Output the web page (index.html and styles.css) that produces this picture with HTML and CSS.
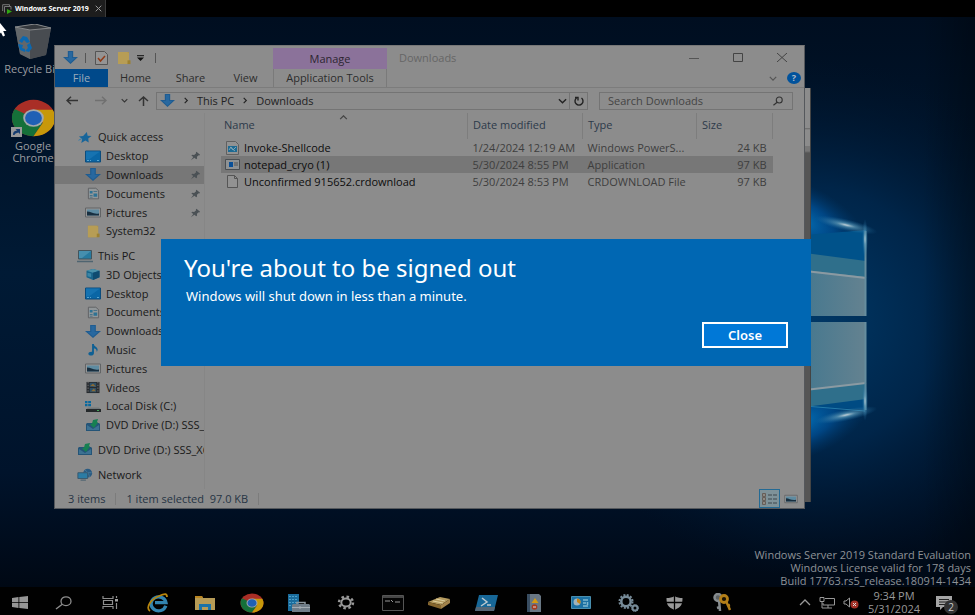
FILE: index.html
```html
<!DOCTYPE html>
<html lang="en">
<head>
<meta charset="utf-8">
<title>Windows Server 2019</title>
<link rel="stylesheet" href="styles.css">
</head>
<body>
<svg class="defs" aria-hidden="true">
  <symbol id="i-down" viewBox="1 1 14 14" preserveAspectRatio="none"><path d="M5.500 1h5v6.500H15L8 15 1 7.500h4.500z" fill="#1f5c91"/><path d="M6.500 2h3v6.500h3L8 13.500 3.500 8.500h3z" fill="#28689f"/></symbol>
  <symbol id="i-desktop" viewBox="0 0 16 12"><path d="M.5.500h15v11H.5z" fill="#0a66a5" stroke="#0c4c7c"/><path d="M1 1h14L4 9H1z" fill="#1673b1"/><path d="M2 10h2M5 10h1M12 10h2" stroke="#59a4ce"/></symbol>
  <symbol id="i-doc" viewBox="0 0 14 16" preserveAspectRatio="none"><path d="M1.500 1.500h8l3 3v10h-11z" fill="#929799" stroke="#5c5e60"/><path d="M3 5h3v3H3zM7 8h4v4H7z" fill="#2d7294"/><path d="M7 5.500h4M3 10.500h3M3 12.500h3" stroke="#3c6d86"/></symbol>
  <symbol id="i-pic" viewBox="0 0 16 12"><path d="M.5 1.500h15v9H.5z" fill="#969696" stroke="#626466"/><path d="M2 3h12v6H2z" fill="#5e8ba1"/><path d="M2 5c4 0 6 3 12 2v2H2z" fill="#182f40"/></symbol>
  <symbol id="i-folder" viewBox="0 0 14 15" preserveAspectRatio="none"><path d="M1 1h11v9h1v4H1z" fill="#a98f45"/><path d="M1 1h9l2 1v11l-2 1H1z" fill="#b79d55"/><path d="M10.500 10h3v4h-3z" fill="#9c8030"/></symbol>
  <symbol id="i-star" viewBox="0 0 16 14"><path d="M10 1l.8 4 4.200.5-3.500 2.700.5 4.300-3.600-2.200L4 13l1-4.500L1.500 6l4.500-.6z" fill="#17659a"/><path d="M1 10l4-2" stroke="#2f7cae"/></symbol>
  <symbol id="i-pin" viewBox="0 0 12 12" preserveAspectRatio="none"><path d="M7 1l4 3.500-1 .8-.6-.2L7.600 7l.1 2-.9.8-2-1.700L1 11l2.600-3.700L1.500 5.500l.9-.9 2.100.2L6.700 2.700 6.400 1.700z" fill="#4b5155"/></symbol>
  <symbol id="i-pc" viewBox="0 0 16 13"><path d="M1.500.500h13v8.500h-13z" fill="#277a9f" stroke="#43545c"/><path d="M2 1h12L5 8H2z" fill="#468fae"/><path d="M0 11.500h16" stroke="#4f6470" stroke-width="1.500"/></symbol>
  <symbol id="i-cube" viewBox="0 0 16 14"><path d="M1 3l7-2 7 2v7l-7 3-7-3z" fill="#18648a"/><path d="M1 3l7 2 7-2-7-2z" fill="#4a91aa"/><path d="M8 5l7-2v7l-7 3z" fill="#0e4b70"/><path d="M2 5l4 1v4L2 9z" fill="#3b86a6"/></symbol>
  <symbol id="i-music" viewBox="0 0 12 14"><path d="M5 1h2c0 3 4 3 4 6 0 1-.5 2-1 2.500C10 6.500 8 6 7 6v5c0 1.500-1.500 2.500-3.200 2.500S1 12.500 1 11.500 2.500 9.300 5 9.500z" fill="#0f6094"/></symbol>
  <symbol id="i-video" viewBox="0 0 14 14"><path d="M0 1h14v12H0z" fill="#272a2e"/><path d="M3.500 2h7v4.500h-7zM3.500 7.500h7V12h-7z" fill="#2f5068"/><path d="M4 5l3-2 3 3zM5 11l3-3 2 3z" fill="#8a6b35"/><path d="M1.700 1v12M12.300 1v12" stroke="#777" stroke-dasharray="1.500 1.500"/></symbol>
  <symbol id="i-disk" viewBox="0 0 16 13"><path d="M0 1h2.500v2.300H0zM3.200 1h2.800v2.300H3.200zM0 4h2.500v2.300H0zM3.200 4h2.800v2.300H3.200z" fill="#08699f"/><path d="M3 7.500h11l2 2H1z" fill="#72787a"/><path d="M1 9h15v3H1z" fill="#25292b"/><path d="M12 10.500h2" stroke="#44a65a"/></symbol>
  <symbol id="i-dvd" viewBox="0 0 16 13"><path d="M2 4h12l1 1v7H1V5z" fill="#245477"/><path d="M2 6l6 4 6-4v5H2z" fill="#3c7192"/><path d="M8 1l5-1-1 3 1 .5L9 9 5 5.500l2-1z" fill="#178052"/></symbol>
  <symbol id="i-net" viewBox="0 0 18 14"><circle cx="12" cy="5.500" r="5" fill="#2a5b82"/><path d="M9 2c3 2 5 5 5 8M7.500 5h9" stroke="#487a9b" fill="none"/><path d="M1 5h11v6.500H1z" fill="#2c7ca4" stroke="#37566b"/><path d="M4 13.300h6" stroke="#3b5869"/></symbol>
  <symbol id="i-chev" viewBox="0 0 10 6"><path d="M1 1l4 4 4-4" fill="none" stroke="currentColor" stroke-width="1.500"/></symbol>
  <symbol id="i-right" viewBox="0 0 6 8"><path d="M1.500 1l3 3-3 3" fill="none" stroke="currentColor" stroke-width="1.300"/></symbol>
  <symbol id="i-mag" viewBox="0 0 14 12"><circle cx="8.500" cy="4.800" r="3.600" fill="none" stroke="currentColor" stroke-width="1.300"/><path d="M6 7.500L1.500 11" stroke="currentColor" stroke-width="1.500"/></symbol>
  <symbol id="i-chrome" viewBox="0 0 48 48" preserveAspectRatio="none"><circle cx="24" cy="24" r="23" fill="#a92e26"/><path d="M24 24L4 12.600A23 23 0 0 0 24 47l10-17z" fill="#157039"/><path d="M24 13.500h20.500A23 23 0 0 1 24 47l10-17z" fill="#c7980a"/><circle cx="24" cy="24" r="11" fill="#a4a8ac"/><circle cx="24" cy="24" r="9" fill="#1f60b5"/></symbol>
</svg>

<header class="vmbar">
  <button class="vmtab" type="button">
    <svg width="10" height="10" viewBox="0 0 10 10"><path d="M.7 7V.7H7.500V3M2.500 8.500v-6H9v3" fill="none" stroke="#777"/><path d="M5 5l5 2.500L5 10z" fill="#2fa812"/></svg>
    <span>Windows Server 2019</span>
    <svg class="vmclose" width="7" height="7" viewBox="0 0 7 7"><path d="M.7.700l5.600 5.600M6.300.7L.7 6.300" stroke="#999"/></svg>
  </button>
</header>

<main class="desktop">
  <svg class="wallpaper" viewBox="0 0 975 570" preserveAspectRatio="none" aria-hidden="true">
    <defs>
      <radialGradient id="glow" cx="811" cy="300" r="260" gradientUnits="userSpaceOnUse"><stop offset="0" stop-color="#003866"/><stop offset=".5" stop-color="#002549"/><stop offset="1" stop-color="#00142b" stop-opacity="0"/></radialGradient>
      <radialGradient id="beam"><stop offset="0" stop-color="#0472b8"/><stop offset=".5" stop-color="#00529a" stop-opacity=".7"/><stop offset="1" stop-color="#003b70" stop-opacity="0"/></radialGradient>
      <radialGradient id="flare"><stop offset="0" stop-color="#c4d3d9"/><stop offset=".3" stop-color="#5d9ab8" stop-opacity=".7"/><stop offset="1" stop-color="#1b6a9c" stop-opacity="0"/></radialGradient>
      <linearGradient id="base" x1="0" y1="0" x2="0" y2="1"><stop offset="0" stop-color="#000e20"/><stop offset=".45" stop-color="#001a35"/><stop offset=".8" stop-color="#00132b"/><stop offset="1" stop-color="#000814"/></linearGradient>
      <linearGradient id="side"><stop offset="0" stop-color="#000" stop-opacity="0"/><stop offset=".7" stop-color="#000" stop-opacity="0"/><stop offset="1" stop-color="#000" stop-opacity=".3"/></linearGradient>
      <linearGradient id="pane"><stop offset="0" stop-color="#46788f"/><stop offset="1" stop-color="#648290"/></linearGradient>
    </defs>
    <path d="M0 0h975v570H0z" fill="url(#base)"/>
    <path d="M0 0h975v570H0z" fill="url(#glow)"/>
    <ellipse cx="800" cy="203" rx="72" ry="36" transform="rotate(26 800 203)" fill="url(#beam)"/>
    <ellipse cx="800" cy="405" rx="72" ry="36" transform="rotate(-20 800 405)" fill="url(#beam)"/>
    <path d="M800 0h175v570H800z" fill="url(#side)"/>
    <path d="M805 218l61-5v86h-61z" fill="#00528a"/>
    <path d="M805 236l61 8v55h-61z" fill="#2f6f8b"/>
    <path d="M805 253l61 7v39h-61z" fill="url(#pane)"/>
    <path d="M805 254l61 7" stroke="#8b9aa2" stroke-width="2"/>
    <path d="M805 305h61v88l-61-4z" fill="#004b83"/>
    <path d="M805 305h61v77l-61 8z" fill="#2f6f8b"/>
    <path d="M805 305h61v61l-61 7z" fill="url(#pane)"/>
    <path d="M805 373l61-7" stroke="#8b9aa2" stroke-width="2"/>
    <path d="M865.500 214v85M865.500 305v88" stroke="#668d9e" stroke-width="2"/>
    <path d="M805 389l60 5" stroke="#247ba9"/>
    <ellipse cx="846" cy="208" rx="32" ry="6" transform="rotate(13 846 208)" fill="url(#flare)"/>
    <ellipse cx="846" cy="398" rx="32" ry="6" transform="rotate(-12 846 398)" fill="url(#flare)"/>
    <ellipse cx="865" cy="222" rx="3" ry="20" fill="url(#flare)"/>
    <ellipse cx="865" cy="384" rx="3" ry="20" fill="url(#flare)"/>
  </svg>

  <div class="shortcuts">
    <a class="shortcut" href="#recycle-bin">
      <svg width="38" height="36" viewBox="0 0 38 36"><path d="M1 3l20-3 16 4-5 27-16 4-10-5z" fill="#55595d"/><path d="M1 3l15 3v29L6 30z" fill="#63676a"/><path d="M16 6l21-2-5 27-16 4z" fill="#484c51"/><path d="M1 3l20-3 16 4-21 2z" fill="#34383d" stroke="#858789"/><path d="M5 17l4-5 4 1 3 5-3 1-3-3-2 3zM4 20l5 1-1 3 3 1v3l-5-2zM16 19l2 5-3 4-4-1 3-3-1-3z" fill="#0b68b0"/></svg>
      <span>Recycle Bin</span>
    </a>
    <a class="shortcut chrome" href="#chrome">
      <svg width="46" height="38" viewBox="0 0 46 38"><use href="#i-chrome" x="1" y="0" width="45" height="38"/><path d="M1 28h11v10H1z" fill="#999"/><path d="M3 36c0-3 1-4 4-4.500L5.500 30H10v5l-1.500-1.500C6 34 5 34.500 4.500 36z" fill="#163d70"/></svg>
      <span>Google Chrome</span>
    </a>
  </div>
  <svg class="cursor" width="7" height="14" viewBox="0 0 7 14" aria-hidden="true"><path d="M0 0l6.500 8H3.200L5 12.500 3 13.500 1 9.500l-1 1z" fill="#fff"/></svg>

  <div class="backwindow"></div>

  <section class="explorer" aria-label="Downloads">
    <div class="titlebar">
      <div class="quickbar">
        <svg width="15" height="13"><use href="#i-down"/></svg><i class="sep"></i>
        <svg class="props" width="13" height="14" viewBox="0 0 13 14"><path d="M.5.500h9l3 3v10H.5z" fill="#949494" stroke="#555"/><path d="M3 7l2.500 3L10 5" fill="none" stroke="#903b18" stroke-width="1.500"/></svg>
        <svg class="newfolder" width="14" height="14"><use href="#i-folder"/></svg>
        <svg class="more" width="7" height="6" viewBox="0 0 7 6"><path d="M0 .7h7" stroke="#111"/><path d="M0 2.500h7L3.500 6z" fill="#111"/></svg><i class="sep"></i>
      </div>
      <div class="context">Manage</div>
      <h1 class="wintitle">Downloads</h1>
      <div class="winctl">
        <button type="button" aria-label="Minimize"><svg width="10" height="10"><path d="M0 5.500h10" stroke="#555"/></svg></button>
        <button type="button" aria-label="Maximize"><svg width="10" height="9"><path d="M.5.500h9v8h-9z" fill="none" stroke="#444"/></svg></button>
        <button type="button" aria-label="Close window"><svg width="10" height="9"><path d="M0 0l10 9M10 0L0 9" stroke="#444"/></svg></button>
      </div>
    </div>
    <div class="ribbon">
      <button class="tab file" type="button">File</button>
      <button class="tab" type="button">Home</button>
      <button class="tab" type="button">Share</button>
      <button class="tab" type="button">View</button>
      <button class="tab tools" type="button">Application Tools</button>
      <span class="ribbonend">
        <svg width="8" height="5"><use href="#i-chev"/></svg>
        <button class="help" type="button" aria-label="Help">?</button>
      </span>
    </div>
    <div class="address">
      <button class="back" type="button" aria-label="Back"><svg width="12" height="9" viewBox="0 0 12 9"><path d="M12 4.500H1M5 .7L1 4.500l4 3.800" fill="none" stroke="currentColor" stroke-width="1.400"/></svg></button>
      <button class="forward" type="button" aria-label="Forward"><svg width="12" height="9" viewBox="0 0 12 9"><path d="M0 4.500h11M7 .7l4 3.800-4 3.800" fill="none" stroke="currentColor" stroke-width="1.400"/></svg></button>
      <button class="recent" type="button" aria-label="Recent locations"><svg width="7" height="5"><use href="#i-chev"/></svg></button>
      <button class="up" type="button" aria-label="Up"><svg width="11" height="10" viewBox="0 0 11 10"><path d="M5.500 10V1M1 5l4.500-4L10 5" fill="none" stroke="currentColor" stroke-width="1.500"/></svg></button>
      <div class="path">
        <svg width="15" height="13"><use href="#i-down"/></svg>
        <svg width="6" height="7"><use href="#i-right"/></svg>
        <a href="#pc">This PC</a>
        <svg width="6" height="7"><use href="#i-right"/></svg>
        <a href="#downloads">Downloads</a>
        <button class="history" type="button" aria-label="Previous locations"><svg width="9" height="6"><use href="#i-chev"/></svg></button>
        <button class="refresh" type="button" aria-label="Refresh"><svg width="10" height="10" viewBox="0 0 10 10"><path d="M7.500 2A4 4 0 1 1 2.500 2M1 1.500h3v3" fill="none" stroke="currentColor" stroke-width="1.400"/></svg></button>
      </div>
      <label class="search"><input type="search" placeholder="Search Downloads" aria-label="Search Downloads"><svg width="12" height="10"><use href="#i-mag"/></svg></label>
    </div>

    <div class="content">
      <nav class="tree" aria-label="Folders">
        <div class="group g6">
          <a class="root" href="#q"><svg><use href="#i-star"/></svg>Quick access</a>
          <a href="#q1"><svg><use href="#i-desktop"/></svg>Desktop<svg class="pin"><use href="#i-pin"/></svg></a>
          <a class="selected" href="#q2"><svg><use href="#i-down"/></svg>Downloads<svg class="pin"><use href="#i-pin"/></svg></a>
          <a href="#q3"><svg class="page"><use href="#i-doc"/></svg>Documents<svg class="pin"><use href="#i-pin"/></svg></a>
          <a href="#q4"><svg><use href="#i-pic"/></svg>Pictures<svg class="pin"><use href="#i-pin"/></svg></a>
          <a href="#q5"><svg class="page"><use href="#i-folder"/></svg>System32</a>
        </div>
        <div class="group g10">
          <a class="root" href="#p"><svg><use href="#i-pc"/></svg>This PC</a>
          <a href="#p1"><svg><use href="#i-cube"/></svg>3D Objects</a>
          <a href="#p2"><svg><use href="#i-desktop"/></svg>Desktop</a>
          <a href="#p3"><svg class="page"><use href="#i-doc"/></svg>Documents</a>
          <a href="#p4"><svg><use href="#i-down"/></svg>Downloads</a>
          <a href="#p5"><svg><use href="#i-music"/></svg>Music</a>
          <a href="#p6"><svg><use href="#i-pic"/></svg>Pictures</a>
          <a href="#p7"><svg><use href="#i-video"/></svg>Videos</a>
          <a href="#p8"><svg><use href="#i-disk"/></svg>Local Disk (C:)</a>
          <a href="#p9"><svg><use href="#i-dvd"/></svg>DVD Drive (D:) SSS_X64</a>
        </div>
        <div class="group"><a class="root" href="#d"><svg><use href="#i-dvd"/></svg>DVD Drive (D:) SSS_X64</a></div>
        <div class="group"><a class="root" href="#n"><svg><use href="#i-net"/></svg>Network</a></div>
      </nav>
      <div class="files">
        <table>
          <colgroup><col><col class="c-date"><col class="c-type"><col class="c-size"></colgroup>
          <thead><tr><th><span>Name</span><svg class="sort" width="9" height="5"><use href="#i-chev"/></svg></th><th>Date modified</th><th>Type</th><th>Size</th></tr></thead>
          <tbody>
            <tr><td><span class="fname"><svg width="13" height="14" viewBox="0 0 13 14"><path d="M.5.500h9l3 3v10H.5z" fill="#929292" stroke="#606060"/><path d="M2 5h9v6H2z" fill="#1d6a93"/><path d="M3 9l2-3 2 3 3-3M4 6l5 4" stroke="#7fa4b4" fill="none"/></svg>Invoke-Shellcode</span></td><td>1/24/2024 12:19 AM</td><td>Windows PowerS...</td><td>24 KB</td></tr>
            <tr class="selected"><td><span class="fname"><svg width="15" height="11" viewBox="0 0 15 11"><path d="M.5.500h14v10H.5z" fill="#8e9294" stroke="#494e52"/><path d="M4 3h4v5H4z" fill="#084f98"/><path d="M9 4h4M9 6h4" stroke="#555"/></svg>notepad_cryo (1)</span></td><td>5/30/2024 8:55 PM</td><td>Application</td><td>97 KB</td></tr>
            <tr><td><span class="fname"><svg width="13" height="13" viewBox="0 0 13 13"><path d="M1.500.500h7l3 3v9h-10z" fill="#929292" stroke="#555"/><path d="M8.500.500v3h3" fill="none" stroke="#555"/></svg>Unconfirmed 915652.crdownload</span></td><td>5/30/2024 8:53 PM</td><td>CRDOWNLOAD File</td><td>97 KB</td></tr>
          </tbody>
        </table>
      </div>
    </div>

    <footer class="status">
      <span class="count">3 items</span><i></i><span>1 item selected&nbsp; 97.0 KB</span><i></i>
      <div class="views">
        <button class="on" type="button" aria-label="Details view"><svg width="17" height="12" viewBox="0 0 17 12"><path d="M1.500.500h3v3h-3zM1.500 4.500h3v3h-3zM1.500 8.500h3v3h-3z" fill="#8d8a84" stroke="#665e58"/><path d="M7 2h4M12 2h4M7 6h4M12 6h4M7 10h4M12 10h4" stroke="#3c464c"/></svg></button>
        <button type="button" aria-label="Large icons view"><svg width="14" height="10"><use href="#i-pic"/></svg></button>
      </div>
    </footer>
  </section>

  <section class="dialog" role="alertdialog" aria-labelledby="dlg-title" aria-describedby="dlg-text">
    <h2 id="dlg-title">You're about to be signed out</h2>
    <p id="dlg-text">Windows will shut down in less than a minute.</p>
    <button type="button">Close</button>
  </section>

  <p class="watermark">Windows Server 2019 Standard Evaluation<br>Windows License valid for 178 days<br>Build 17763.rs5_release.180914-1434</p>
</main>

<footer class="taskbar">
  <button class="start" type="button" aria-label="Start"><svg width="16" height="13" viewBox="0 0 16 13"><path d="M0 2l6.500-1v5.200H0zM7.300.9L16 0v6.200H7.300zM0 6.900h6.500V12L0 11zM7.300 6.900H16V13l-8.700-.9z" fill="#969696"/></svg></button>
  <button type="button" aria-label="Search"><svg width="17" height="14" viewBox="0 0 17 14"><ellipse cx="11" cy="5.200" rx="5" ry="4.400" fill="none" stroke="#8e8e8e" stroke-width="1.300"/><path d="M7.300 8.300L1 13" stroke="#8e8e8e" stroke-width="1.400"/></svg></button>
  <button type="button" aria-label="Task View"><svg width="17" height="13" viewBox="0 0 17 13"><path d="M1 0v2.500h10V0M1 13v-2.500h10V13M1.500 4.500h9v4h-9zM14.500 0v2M14.500 7v6" fill="none" stroke="#8e8e8e" stroke-width="1.200"/><path d="M13 3h3v2.500h-3z" fill="#a0a0a0"/></svg></button>
  <button type="button" aria-label="Internet Explorer"><svg width="22" height="20" viewBox="0 0 22 20"><path d="M18.800 12.800A7.500 7 0 1 1 19 9.700H8" fill="none" stroke="#3284b0" stroke-width="3.300"/><path d="M3 18C-2 15 4 6 12 3c7-3 8-2 8 1" fill="none" stroke="#b8860d" stroke-width="1.800"/></svg></button>
  <button type="button" aria-label="File Explorer"><svg width="22" height="16" viewBox="0 0 22 16"><path d="M1 1h7l1 2h12v12H1z" fill="#b69b56"/><path d="M1 1h7l1 2H1z" fill="#b98521"/><path d="M5 9h12v6h-3v-3H8v3H5z" fill="#1a72a7"/></svg></button>
  <button type="button" aria-label="Google Chrome"><svg width="24" height="20"><use href="#i-chrome"/></svg></button>
  <button type="button" aria-label="Server Manager"><svg width="24" height="20" viewBox="0 0 24 20"><path d="M1 1h11v17H1z" fill="#1b6c9c"/><path d="M2 3.500h9M2 6.500h9M2 9.500h9M2 12.500h9" stroke="#4da0c8" stroke-dasharray="2 1"/><path d="M10 11V9.500h8V11" fill="none" stroke="#8e989f" stroke-width="1.500"/><path d="M6 11h16l1 1v7H5v-7z" fill="#707d88"/><path d="M5 14.500h18M13 13v3" stroke="#a4adb4"/></svg></button>
  <button type="button" aria-label="Settings"><svg width="18" height="15" viewBox="0 0 18 15"><ellipse cx="9" cy="7.500" rx="7" ry="5.800" fill="none" stroke="#999" stroke-width="2.500" stroke-dasharray="2.500 2.550"/><ellipse cx="9" cy="7.500" rx="4.700" ry="3.900" fill="none" stroke="#999" stroke-width="2"/></svg></button>
  <button type="button" aria-label="Command Prompt"><svg width="22" height="16" viewBox="0 0 22 16"><path d="M.5.500h21v15H.5z" fill="#050505" stroke="#555"/><path d="M1 2h20" stroke="#888"/><path d="M3 6h3M7 5v2M9 5l2 2M13 7h5" stroke="#999"/></svg></button>
  <button type="button" aria-label="Local policy"><svg width="23" height="13" viewBox="0 0 23 13"><path d="M0 6l12-5 10 2-9 6z" fill="#b59b60"/><path d="M0 6l13 3v4L0 9z" fill="#86662e"/><path d="M13 9l9-6v4l-9 6z" fill="#a3834b"/><path d="M5 5l10 2M8 3l9 2" stroke="#ddd0a0"/></svg></button>
  <button type="button" aria-label="Windows PowerShell ISE"><svg width="23" height="16" viewBox="0 0 23 16"><path d="M4 0h19l-4 16H0z" fill="#176797"/><path d="M1 12h19l-1 4H0z" fill="#546675"/><path d="M7 3l5 4-6 4M12 10h4" fill="none" stroke="#bec9cf" stroke-width="1.500"/></svg></button>
  <button type="button" aria-label="Event Viewer"><svg width="16" height="18" viewBox="0 0 16 18"><path d="M1 0h12l2 2v16H1z" fill="#697784"/><path d="M1 0h3v18H1z" fill="#394d61"/><path d="M9 4l3.500 5h-7z" fill="#d69a13"/><circle cx="8.500" cy="13" r="2.800" fill="#a83a1f"/><path d="M7 13h3" stroke="#ddd"/></svg></button>
  <button type="button" aria-label="Control Panel"><svg width="20" height="13" viewBox="0 0 20 13"><path d="M.5.500h19v12H.5z" fill="#1b70a3" stroke="#498eae"/><circle cx="6" cy="6" r="3.500" fill="#9eb4bd"/><path d="M6 6V2.500A3.500 3.500 0 0 1 9 8z" fill="#c58416"/><path d="M12 4h5M12 7h3M12 10h5M16.500 6v3" stroke="#80b8d0" stroke-width="1.500"/></svg></button>
  <button type="button" aria-label="Services"><svg width="22" height="18" viewBox="0 0 22 18"><circle cx="9" cy="7.500" r="6.500" fill="none" stroke="#778b98" stroke-width="2" stroke-dasharray="2 1.400"/><circle cx="9" cy="7.500" r="4.700" fill="none" stroke="#778b98" stroke-width="2.500"/><circle cx="18" cy="14" r="2.500" fill="none" stroke="#778b98" stroke-width="2"/><circle cx="18" cy="14" r="3.500" fill="none" stroke="#778b98" stroke-dasharray="1.200 1"/></svg></button>
  <button type="button" aria-label="Windows Security"><svg width="17" height="14" viewBox="0 0 17 14"><path d="M8.500 0c2 1.500 5 2 8 2 0 6-1 9-8 12C1.500 11 .5 8 .5 2c3 0 6-.5 8-2z" fill="#999"/><path d="M8.500 0v14M0 6.500h17" stroke="#000" stroke-width="1.300"/></svg></button>
  <button type="button" aria-label="Credentials"><svg width="20" height="19" viewBox="0 0 20 19"><circle cx="6" cy="4.500" r="3.500" fill="#5c6164" stroke="#858b8e" stroke-width="2.500"/><path d="M7 7l1 11M8 14l-3 1" stroke="#858b8e" stroke-width="2.500"/><circle cx="12" cy="6" r="3.500" fill="#1a1204" stroke="#b27e18" stroke-width="2.800"/><path d="M14 8l4 9M15 13l3-1" stroke="#b27e18" stroke-width="2.500"/></svg></button>
  <div class="tray">
    <svg width="12" height="7" viewBox="0 0 12 7"><path d="M1 6l5-5 5 5" fill="none" stroke="#999" stroke-width="1.300"/></svg>
    <svg width="16" height="12" viewBox="0 0 16 12"><path d="M6 1.500h9.500v6.500H4V6M1 .5h4v4H1zM3 4v7h10M9 8v3" fill="none" stroke="#999"/></svg>
    <svg width="16" height="12" viewBox="0 0 16 12"><path d="M1 4h2l3.500-3v9L3 7H1z" fill="none" stroke="#999"/><circle cx="11.500" cy="7.500" r="4" fill="#a33127"/><path d="M10 6l3 3M13 6l-3 3" stroke="#ddd"/></svg>
    <time datetime="2024-05-31T21:34">9:34 PM<br>5/31/2024</time>
    <button class="notify" type="button" aria-label="Notifications, 2 new"><svg width="16" height="14" viewBox="0 0 16 14"><path d="M0 0h16v11H7l-3 3v-3H0z" fill="#a5a5a5"/><path d="M3 3.500h10M3 6h10M3 8.500h6" stroke="#222"/></svg><span>2</span></button>
  </div>
</footer>
</body>
</html>
```
FILE: styles.css
```css
* { box-sizing: border-box; }

body {
  margin: 0;
  height: 100vh;
  min-height: 480px;
  display: flex;
  flex-direction: column;
  overflow: hidden;
  background: #000;
  color: #111;
  font: 11px/16px "Open Sans", "Noto Sans", sans-serif;
}

button {
  display: flex;
  align-items: center;
  justify-content: center;
  margin: 0;
  padding: 0;
  border: 0;
  background: none;
  color: inherit;
  font: inherit;
}

a { color: inherit; text-decoration: none; }
svg { flex: none; display: block; }
.defs { position: absolute; width: 0; height: 0; }

/* Console tab strip */
.vmbar { flex: none; height: 17px; display: flex; background: #000; }
.vmtab {
  gap: 3px;
  padding: 0 3px 0 2px;
  border-right: 1px solid #3a3a3a;
  background: #1d1d1d;
  color: #fff;
  font-family: "Noto Sans", sans-serif;
  font-size: 7px;
  font-weight: 700;
}
.vmclose { margin-left: 3px; }

/* Desktop */
.desktop { position: relative; flex: 1; min-height: 0; overflow: hidden; }
.wallpaper { position: absolute; inset: 0; width: 100%; height: 100%; }
.cursor { position: absolute; left: 0; top: 6px; }
.shortcuts {
  position: relative;
  width: 66px;
  padding-top: 7px;
  display: flex;
  flex-direction: column;
  gap: 24px;
  color: #9a9ca0;
}
.shortcut {
  display: flex;
  flex-direction: column;
  align-items: center;
  line-height: 12px;
  text-align: center;
}
.shortcut span { margin-top: 3px; white-space: nowrap; }
.chrome span { width: 50px; white-space: normal; }

.backwindow {
  position: absolute;
  left: 400px;
  right: 164px;
  top: 71px;
  bottom: 85px;
  border-right: 1px solid #444;
  background: linear-gradient(#8c8c8c 40px, #666 40px, #8c8c8c 42px, #8c8c8c 58px, #777 58px, #777 63px, #555 65px);
}

.explorer {
  position: absolute;
  left: 54px;
  right: 170px;
  top: 28px;
  bottom: 78px;
  display: flex;
  flex-direction: column;
  border: 1px solid #55585c;
  border-top-color: #777;
  background: #8c8c8c;
}

.titlebar { flex: none; height: 23px; display: flex; align-items: stretch; }
.quickbar { width: 218px; display: flex; align-items: center; padding-left: 8px; }
.sep { width: 1px; height: 10px; margin-left: 7px; background: #555; }
.props { margin-left: 9px; }
.newfolder { margin-left: 9px; }
.more { margin: 0 4px 0 6px; }
.context {
  width: 114px;
  margin-top: 2px;
  background: #8b729a;
  color: #2b2530;
  font-weight: 500;
  line-height: 21px;
  text-align: center;
}
.wintitle { flex: 1; margin: 0 0 0 12px; color: #666; font-size: 11px; font-weight: 400; line-height: 23px; }
.winctl { display: flex; }
.winctl button { width: 44px; }

.ribbon { flex: none; height: 19px; display: flex; border-bottom: 1px solid #7c7c7c; }
.tab { width: 55px; color: #2c2c2c; }
.tab.file { width: 53px; background: #00498a; color: #9aabba; font-weight: 500; }
.tab.tools { width: 114px; border: solid #7a7a7a; border-width: 0 1px; white-space: nowrap; }
.ribbonend { flex: 1; display: flex; align-items: center; justify-content: flex-end; gap: 10px; padding-right: 3px; color: #555; }
.help { width: 14px; height: 12px; border-radius: 50%; background: #00529c; color: #b0bcc8; font-size: 9px; font-weight: 700; }

.address { flex: none; height: 25px; display: flex; align-items: center; padding: 0 11px 0 5px; color: #333; }
.back { width: 24px; }
.forward { width: 34px; color: #707070; }
.recent { width: 12px; }
.up { width: 26px; }
.path {
  flex: 1;
  height: 18px;
  display: flex;
  align-items: center;
  gap: 8px;
  padding-left: 3px;
  border: 1px solid #747474;
  color: #222;
}
.history { margin-left: auto; }
.refresh { width: 18px; height: 16px; margin-left: -6px; border-left: 1px solid #747474; }
.search {
  width: 194px;
  height: 18px;
  margin-left: 11px;
  padding: 0 8px;
  display: flex;
  align-items: center;
  border: 1px solid #747474;
}
.search input { flex: 1; min-width: 0; padding: 0; border: 0; outline: 0; background: none; font: inherit; }
.search input::placeholder { color: #444; opacity: 1; }

.content { flex: 1; min-height: 0; display: flex; }
.tree {
  width: 150px;
  padding: 15px 0 5px;
  display: flex;
  flex-direction: column;
  gap: 6px;
  border-right: 1px solid #868686;
  color: #191919;
}
.group { flex: 1 1 0; min-height: 0; display: flex; flex-direction: column; }
.g6 { flex-grow: 6; }
.g10 { flex-grow: 10; }
.tree a {
  flex: 1 1 0;
  min-height: 0;
  display: flex;
  align-items: center;
  gap: 5px;
  padding-left: 30px;
  overflow: hidden;
  white-space: nowrap;
}
.tree .root { padding-left: 22px; }
.tree svg { width: 16px; height: 13px; }
.tree .page { width: 13px; margin: 0 1px 0 2px; }
.tree .pin { width: 11px; height: 10px; margin: 0 3px 0 auto; }
.selected { background: #777; }

.files { flex: 1; min-width: 0; padding: 0 31px 0 16px; }
table { width: 100%; table-layout: fixed; border-collapse: collapse; }
.c-date { width: 115px; }
.c-type { width: 114px; }
.c-size { width: 76px; }
th {
  position: relative;
  height: 26px;
  padding: 0 0 2px 5px;
  border-right: 1px solid #7d7d7d;
  color: #2d3a4a;
  font-weight: 400;
  text-align: left;
}
th:first-child { padding-left: 3px; }
.sort { position: absolute; left: 48%; top: 2px; transform: rotate(180deg); color: #444; }
td { height: 17px; padding: 0 0 0 5px; color: #3e3e3e; line-height: 15px; white-space: nowrap; }
td:first-child { padding-left: 4px; color: #0c0c0c; font-weight: 500; }
td:last-child { padding-right: 6px; text-align: right; }
.fname { display: flex; align-items: center; gap: 4px; }
.fname svg { width: 15px; }

.status { flex: none; height: 19px; display: flex; align-items: center; padding-left: 13px; color: #263444; }
.status i { width: 1px; height: 12px; margin: 0 10px; background: #7c7c7c; }
.views { margin-left: auto; display: flex; align-self: stretch; }
.views button { width: 21px; margin-right: 3px; }
.views .on { margin: 0; border: 1px solid #246a94; background: #7e9299; }

/* Sign-out notice */
.dialog {
  position: absolute;
  left: 161px;
  right: 164px;
  top: 222px;
  padding: 13px 23px 18px 23px;
  display: flex;
  flex-direction: column;
  background: #0067b3;
  color: #fff;
  font-family: "Noto Sans", "Open Sans", sans-serif;
}
.dialog h2 { margin: 0; font-size: 24px; font-weight: 400; line-height: 32px; }
.dialog p { margin: 4px 0 18px 2px; font-size: 13px; line-height: 16px; }
.dialog button {
  align-self: flex-end;
  width: 86px;
  height: 26px;
  border: 2px solid #fff;
  background: #0078d7;
  font-size: 13px;
  font-weight: 600;
}

.watermark {
  position: absolute;
  right: 4px;
  bottom: 0;
  margin: 0;
  color: #8e9297;
  line-height: 13px;
  text-align: right;
}

/* Taskbar */
.taskbar { flex: none; height: 28px; padding-top: 3px; display: flex; background: #010101; color: #999; overflow: hidden; }
.taskbar > button { width: 47px; }
.taskbar > .start { width: 40px; }
.tray { flex: 1; display: flex; align-items: center; justify-content: flex-end; gap: 8px; padding-right: 23px; }
.tray time { width: 54px; padding-bottom: 2px; line-height: 13px; text-align: center; }
.notify { position: relative; margin-left: 7px; }
.notify span {
  position: absolute;
  left: 8px;
  top: 4px;
  width: 14px;
  height: 14px;
  border-radius: 50%;
  background: #333;
  color: #ccc;
  font-size: 10px;
  line-height: 14px;
}
```
